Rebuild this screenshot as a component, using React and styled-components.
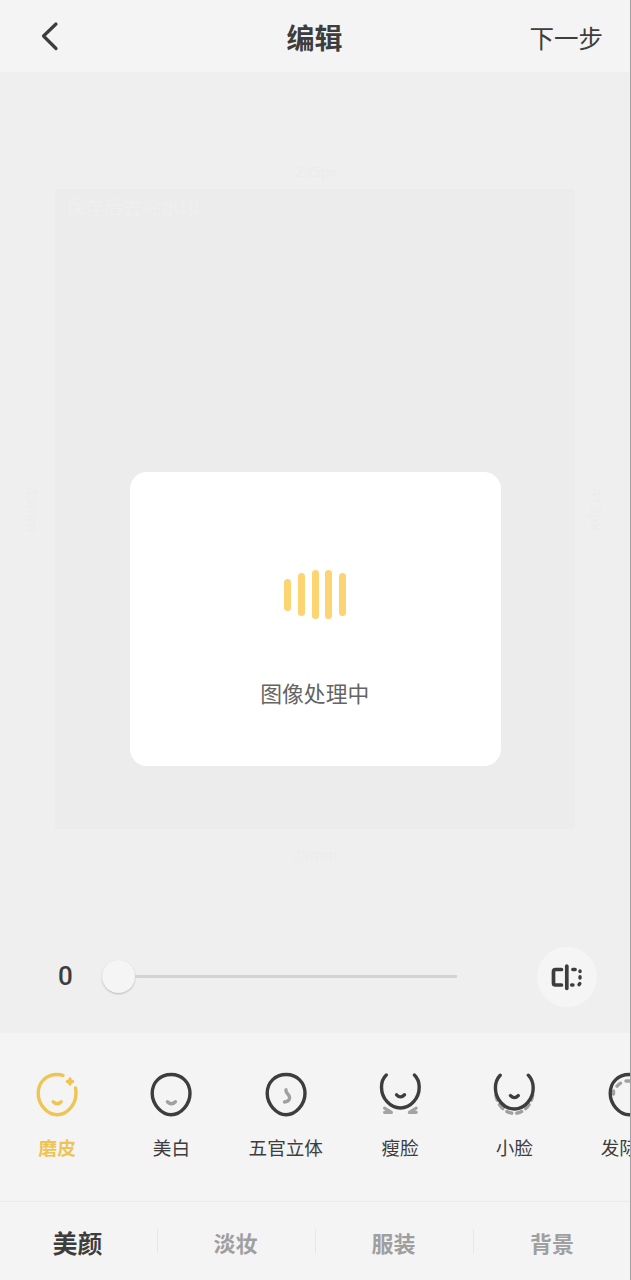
import React from "react";
import styled, { createGlobalStyle } from "styled-components";

const GlobalStyle = createGlobalStyle`
  * { box-sizing: border-box; }
  body { margin: 0; background: #f4f4f4; }
`;

const Screen = styled.div`
  width: 631px;
  height: 1280px;
  display: flex;
  flex-direction: column;
  overflow: hidden;
  background: #f4f4f4;
  border-right: 1px solid #a2a2a2;
  color: #3d3d3d;
  font-family: "Noto Sans CJK SC", sans-serif;
`;

const Header = styled.header`
  flex: none;
  height: 72px;
  display: grid;
  grid-template-columns: 1fr auto 1fr;
  align-items: center;
  padding: 4px 27px 0 40px;
`;

const BackButton = styled.div`
  display: flex;
  margin-top: -4px;
`;

const Title = styled.h1`
  margin: -2px 0 0;
  font-size: 28px;
  line-height: 40px;
  font-weight: 700;
  transform: translateX(-7px);
`;

const NextButton = styled.div`
  justify-self: end;
  font-size: 24.5px;
  line-height: 36px;
`;

const Stage = styled.main`
  position: relative;
  flex: none;
  height: 961px;
  display: flex;
  flex-direction: column;
  background: #efefef;
`;

const Preview = styled.div`
  display: grid;
  grid-template-columns: 55px 520px 55px;
  grid-template-rows: 117px 640px 50px;
  justify-items: center;
`;

const SizeLabel = styled.span`
  grid-area: ${(p) => p.$area};
  align-self: ${(p) => p.$align || "center"};
  padding: ${(p) => p.$pad || "0"};
  writing-mode: ${(p) => (p.$vertical ? "vertical-rl" : "horizontal-tb")};
  font: 15px/20px "Open Sans", sans-serif;
  color: #ececec;
`;

const Photo = styled.div`
  grid-area: 2 / 2;
  width: 100%;
  padding: 4px 11px;
  background: #ececec;
  color: #efefef;
  font-size: 19px;
  line-height: 28px;
`;

const Dialog = styled.section`
  position: absolute;
  left: 130px;
  top: 400px;
  width: 370.5px;
  height: 293.5px;
  padding-top: 98px;
  display: flex;
  flex-direction: column;
  align-items: center;
  gap: 58px;
  border-radius: 17px;
  background: #fff;
`;

const Loader = styled.div`
  height: 49px;
  display: flex;
  align-items: center;
  gap: 6.7px;
`;

const LoaderBar = styled.i`
  width: 7px;
  height: ${(p) => p.$height}px;
  border-radius: 4px;
  background: #fcd472;
`;

const LoadingText = styled.p`
  margin: 0;
  padding-right: 1px;
  font-size: 21.8px;
  line-height: 32px;
  color: #646464;
`;

const Controls = styled.div`
  flex: 1;
  display: flex;
  align-items: center;
  padding: 41px 33px 0 58px;
`;

const Value = styled.span`
  width: 44px;
  padding-bottom: 2px;
  font: 500 26px/30px Roboto, sans-serif;
`;

const Slider = styled.div`
  width: 355px;
  height: 34px;
  display: flex;
  align-items: center;
`;

const Knob = styled.div`
  width: 33px;
  height: 33px;
  border-radius: 50%;
  background: #f5f5f5;
  box-shadow: 0 1px 2px rgba(0, 0, 0, 0.22);
`;

const Track = styled.div`
  flex: 1;
  height: 3px;
  background: #d3d3d3;
`;

const CompareButton = styled.div`
  width: 60px;
  height: 60px;
  margin-left: auto;
  display: flex;
  align-items: center;
  justify-content: center;
  border-radius: 50%;
  background: #f5f5f5;
`;

const Tools = styled.div`
  flex: none;
  height: 169px;
  display: flex;
  overflow: hidden;
  border-bottom: 1px solid #ebebeb;
`;

const Tool = styled.div`
  flex: none;
  width: 114.3px;
  padding-top: 37px;
  display: flex;
  flex-direction: column;
  align-items: center;
  gap: 16px;
  color: ${(p) => (p.$active ? "#efc453" : "#3d3d3d")};
  font-weight: ${(p) => (p.$active ? 700 : 400)};
  font-size: 18.6px;
  line-height: 26px;
  white-space: nowrap;
`;

const Tabs = styled.nav`
  flex: 1;
  display: flex;
  align-items: center;
`;

const Tab = styled.div`
  flex: none;
  width: 158px;
  height: 24px;
  display: flex;
  align-items: center;
  justify-content: center;
  border-right: 1px solid #e7e7e7;
  color: ${(p) => (p.$active ? "#3d3d3d" : "#9f9f9f")};
  font-size: ${(p) => (p.$active ? 25 : 22)}px;
  font-weight: 700;

  &:last-child { border-right: 0; }
`;

const TabLabel = styled.span`
  padding: 2px 2px 0 0;
`;

const FACE = "M24.2 4.5C35 4.5 43 12.5 43 23.3C43 34.3 34 44.7 24.2 44.7S5.2 34.3 5.2 23.3C5.2 12.5 13 4.5 24.2 4.5Z";

const drawings = {
  smooth: (
    <>
      <path d="M30 5.4C28 4.7 26 4.5 24.2 4.5C13 4.5 5.2 12.5 5.2 23.3C5.2 34.3 14 44.7 24.2 44.7S43 34.3 43 23.3C43 21 42.8 19.5 42.5 18" />
      <path d="M20.2 31.8Q24.2 35.8 28.2 31.8" />
      <path d="M37 8.9V14.1M34.4 11.5H39.6" />
    </>
  ),
  whiten: (
    <>
      <path d={FACE} />
      <path d="M20.4 31.8Q24.4 35.8 28.4 31.8" stroke="#a0a0a0" />
    </>
  ),
  features: (
    <>
      <path d={FACE} />
      <path d="M23.9 19.8L24.3 22L27.2 26Q29.2 30.7 22.5 32" stroke="#a0a0a0" />
    </>
  ),
  slim: (
    <>
      <path d="M10.3 5C7 8 5.5 12.5 5.5 17.2C5.5 28.2 14 38 24.4 38S43.2 28.2 43.2 17.2C43.2 12.5 41.6 8 38.4 5" />
      <path d="M20.6 24.8Q24.5 28.9 28.5 24.8" />
      <path d="M8.6 38.2L15.4 42.3M8.6 42.3H15.4M40.2 38.2L33.4 42.3M40.2 42.3H33.4" stroke="#a3a3a3" strokeWidth="3.2" />
    </>
  ),
  small: (
    <>
      <path
        d="M5.8 24C6.8 34.5 15 43.4 24.3 43.4S41.8 34.5 42.8 24"
        stroke="#a0a0a0"
        strokeDasharray="5.2 5"
        strokeDashoffset="-1"
      />
      <path d="M10.2 5.2C7 8.5 5.4 13 5.4 18C5.4 29 14 39 24.3 39S43.2 29 43.2 18C43.2 13 41.4 8.5 38.3 5.2" />
      <path d="M20.5 25.6Q24.4 29.6 28.3 25.6" />
    </>
  ),
  hairline: (
    <>
      <path d="M8.5 24V21M12 16.2Q13.5 14.2 15.5 13.2M21 11H27M33 13Q35 14.2 36.3 16.2" stroke="#a0a0a0" />
      <path d={FACE} />
    </>
  ),
};

const tools = [
  ["smooth", "磨皮"],
  ["whiten", "美白"],
  ["features", "五官立体"],
  ["slim", "瘦脸"],
  ["small", "小脸"],
  ["hairline", "发际线"],
];

const tabs = ["美颜", "淡妆", "服装", "背景"];

function ToolIcon({ name }) {
  return (
    <svg width="48" height="48" viewBox="0 0 48 48" fill="none" stroke="currentColor" strokeWidth="3.4" strokeLinecap="round" strokeLinejoin="round">
      {drawings[name]}
    </svg>
  );
}

export default function App() {
  return (
    <Screen>
      <GlobalStyle />
      <Header>
        <BackButton>
          <svg width="20" height="30" viewBox="0 0 20 30" fill="none" stroke="#3d3d3d" strokeWidth="3.2" strokeLinecap="round" strokeLinejoin="round">
            <path d="M16 3L3.5 15L16 27.5" />
          </svg>
        </BackButton>
        <Title>编辑</Title>
        <NextButton>下一步</NextButton>
      </Header>

      <Stage>
        <Preview>
          <SizeLabel $area="1 / 2" $align="end" $pad="0 0 8px 3px">295px</SizeLabel>
          <SizeLabel $area="2 / 1" $vertical $pad="0 0 0 10px">35mm</SizeLabel>
          <Photo>保存后去除水印</Photo>
          <SizeLabel $area="2 / 3" $vertical $pad="0 12px 0 0">413px</SizeLabel>
          <SizeLabel $area="3 / 2">25mm</SizeLabel>
        </Preview>
        <Controls>
          <Value>0</Value>
          <Slider>
            <Knob />
            <Track />
          </Slider>
          <CompareButton>
            <svg width="34" height="30" viewBox="0 0 34 30" fill="none" stroke="#3d3d3d" strokeWidth="3.7" strokeLinecap="round" strokeLinejoin="round">
              <path d="M11.5 7.5H5.5Q3.5 7.5 3.5 9.5V21Q3.5 23 5.5 23H11.5" />
              <path d="M16.8 4.2V26.3" />
              <path d="M22.8 7.5H25.2M30 9V9.6M30 14.7V16M29.8 21.6L29 22.6M21.6 23H23" strokeWidth="3.4" />
            </svg>
          </CompareButton>
        </Controls>
        <Dialog>
          <Loader>
            {[32, 43, 49, 49, 43].map((height, i) => (
              <LoaderBar key={i} $height={height} />
            ))}
          </Loader>
          <LoadingText>图像处理中</LoadingText>
        </Dialog>
      </Stage>

      <Tools>
        {tools.map(([name, label], i) => (
          <Tool key={name} $active={i === 0}>
            <ToolIcon name={name} />
            <span>{label}</span>
          </Tool>
        ))}
      </Tools>

      <Tabs>
        {tabs.map((label, i) => (
          <Tab key={label} $active={i === 0}>
            <TabLabel>{label}</TabLabel>
          </Tab>
        ))}
      </Tabs>
    </Screen>
  );
}
